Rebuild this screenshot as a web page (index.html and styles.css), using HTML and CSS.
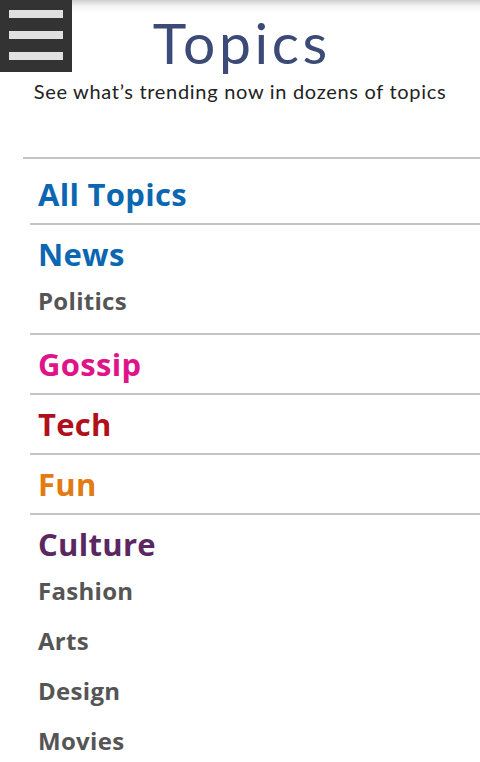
FILE: index.html
```html
<!DOCTYPE html>
<html lang="en">
<head>
    <meta charset="UTF-8">
    <meta name="viewport" content="width=device-width, initial-scale=1.0">
    <title>Topics</title>
    <link rel="stylesheet" href="styles.css">
</head>
<body>
    <!-- Шапка с кнопкой меню -->
    <header class="header">
        <button class="menu-button" aria-label="Menu">
            <span></span>
            <span></span>
            <span></span>
        </button>
        <h1 class="title">Topics</h1>
        <p class="subtitle">See what’s trending now in dozens of topics</p>
    </header>

    <!-- Список тем -->
    <ul class="topics">
        <li class="topic"><a class="topic-name blue" href="#">All Topics</a></li>
        <li class="topic">
            <a class="topic-name blue" href="#">News</a>
            <ul class="subtopics">
                <li><a href="#">Politics</a></li>
            </ul>
        </li>
        <li class="topic"><a class="topic-name pink" href="#">Gossip</a></li>
        <li class="topic"><a class="topic-name red" href="#">Tech</a></li>
        <li class="topic"><a class="topic-name orange" href="#">Fun</a></li>
        <li class="topic">
            <a class="topic-name purple" href="#">Culture</a>
            <ul class="subtopics">
                <li><a href="#">Fashion</a></li>
                <li><a href="#">Arts</a></li>
                <li><a href="#">Design</a></li>
                <li><a href="#">Movies</a></li>
            </ul>
        </li>
    </ul>
</body>
</html>
```

FILE: styles.css
```css
/* Основные стили */
body {
    margin: 0;
    font-family: "Open Sans", "Noto Sans", sans-serif;
    background-color: #fff;
    overflow: hidden;
}
.header {
    position: relative;
    height: 157px;
    background: linear-gradient(to bottom, #cfcfcf 0px, #f4f4f4 6px, #fff 14px);
    text-align: center;
}
.menu-button {
    position: absolute;
    top: 0;
    left: 0;
    width: 72px;
    height: 72px;
    padding: 10px 9px 12px;
    border: none;
    background: #333;
    display: flex;
    flex-direction: column;
    justify-content: space-between;
    cursor: pointer;
}
.menu-button span {
    display: block;
    height: 8px;
    background: #e0e0e0;
}
.title {
    margin: 0;
    padding-top: 10px;
    font-family: Lato, sans-serif;
    font-weight: 400;
    font-size: 57px;
    line-height: 64px;
    letter-spacing: 3.6px;
    text-indent: 3.6px;
    color: #3b4a76;
}
.subtitle {
    margin: 0;
    padding-top: 5px;
    font-family: Lato, sans-serif;
    font-weight: 400;
    font-size: 20px;
    line-height: 24px;
    letter-spacing: 0.7px;
    color: #222;
}
.topics {
    list-style: none;
    margin: 0 0 0 23px;
    padding: 6px 0 0 7px;
    border-top: 2px solid #c4c4c8;
}
.topic {
    border-bottom: 2px solid #c4c4c8;
}
.topic a {
    text-decoration: none;
}
.topic-name {
    display: block;
    padding-left: 8px;
    font-weight: 700;
    font-size: 31px;
    line-height: 58px;
    letter-spacing: 0.3px;
}
.blue { color: #0b67b2; }
.pink { color: #e0148a; }
.red { color: #b0101c; }
.orange { color: #e37a12; }
.purple { color: #5b2760; }
.subtopics {
    list-style: none;
    margin: 0;
    padding: 0 0 14px 8px;
    display: flex;
    flex-direction: column;
    gap: 14px;
}
.subtopics a {
    display: block;
    font-weight: 700;
    font-size: 24px;
    line-height: 36px;
    letter-spacing: 0.3px;
    color: #555;
}
```
